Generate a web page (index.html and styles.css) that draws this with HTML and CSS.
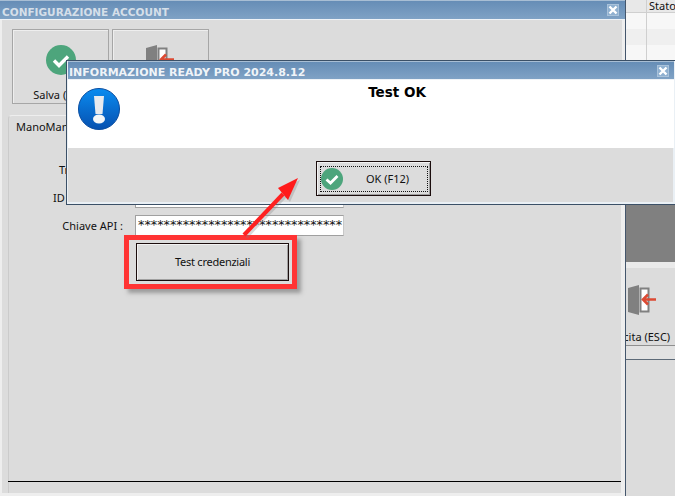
FILE: index.html
```html
<!DOCTYPE html>
<html lang="it">
<head>
<meta charset="utf-8">
<title>Configurazione account</title>
<link rel="stylesheet" href="styles.css">
</head>
<body>
<div class="desktop">
  <section class="window config">
    <header class="titlebar">
      <span class="title title-muted">CONFIGURAZIONE ACCOUNT</span>
      <span class="close">
        <svg width="10" height="10" viewBox="0 0 10 10"><path d="M1.500 1.500l7 7M8.500 1.500l-7 7" stroke="#fff" stroke-width="2.400"/></svg>
      </span>
    </header>
    <div class="config-body">
      <div class="toolbar">
        <div class="tool">
          <svg class="tool-icon" width="30" height="30" viewBox="0 0 30 30"><circle cx="15" cy="15" r="15" fill="#4da57c"/><path d="M8 15.500l5 5 9-9" fill="none" stroke="#fff" stroke-width="3.400"/></svg>
          <span class="tool-label">Salva (F12)</span>
        </div>
        <div class="tool">
          <svg class="tool-icon" width="30" height="30" viewBox="0 0 30 30"><path d="M0 3L11 0V30L0 27Z" fill="#808080"/><path d="M12.500 3.500H20.500V26.500H12.500Z" fill="#fff" stroke="#808080" stroke-width="2"/><path d="M28 14.500H15M20 9.500L15 14.500L20 19.500" fill="none" stroke="#dc4a33" stroke-width="2.600"/></svg>
          <span class="tool-label">Uscita (ESC)</span>
        </div>
      </div>
      <div class="pane">
        <div class="pane-tab">ManoMano</div>
        <div class="form">
          <div class="row"><label class="field-label">Tracking ID :</label><div class="input"></div></div>
          <div class="row"><label class="field-label">ID Merchant :</label><div class="input"></div></div>
          <div class="row"><label class="field-label">Chiave API :</label><div class="input">********************************</div></div>
          <div class="row row-button"><div class="test-btn">Test credenziali</div></div>
        </div>
      </div>
    </div>
  </section>

  <aside class="side">
    <div class="grid-head"><span class="col-a"></span><span class="col-b">Stato</span></div>
    <div class="grid-row"><span class="col-a"></span><span class="col-b"></span></div>
    <div class="grid-row grid-row-alt"><span class="col-a"></span><span class="col-b"></span></div>
    <div class="grid-row"><span class="col-a"></span><span class="col-b"></span></div>
    <div class="grid-empty"></div>
    <div class="side-tool">
      <svg class="side-icon" width="30" height="30" viewBox="0 0 30 30"><path d="M0 3L11 0V30L0 27Z" fill="#808080"/><path d="M12.500 3.500H20.500V26.500H12.500Z" fill="#fff" stroke="#808080" stroke-width="2"/><path d="M28 14.500H15M20 9.500L15 14.500L20 19.500" fill="none" stroke="#dc4a33" stroke-width="2.600"/></svg>
      <span class="side-label">Uscita (ESC)</span>
    </div>
    <div class="side-strip"></div>
    <div class="side-rest"></div>
  </aside>

  <section class="window dialog">
    <header class="titlebar dialog-title">
      <span class="title">INFORMAZIONE READY PRO 2024.8.12</span>
      <span class="close">
        <svg width="10" height="10" viewBox="0 0 10 10"><path d="M1.500 1.500l7 7M8.500 1.500l-7 7" stroke="#fff" stroke-width="2.400"/></svg>
      </span>
    </header>
    <div class="dialog-msg">
      <svg class="info-icon" width="42" height="42" viewBox="0 0 42 42">
        <defs><linearGradient id="blue" x1="0" y1="0" x2="0" y2="1"><stop offset="0" stop-color="#0a8cf0"/><stop offset="1" stop-color="#0650b0"/></linearGradient></defs>
        <circle cx="21" cy="21" r="20.500" fill="url(#blue)" stroke="#0a4da0"/>
        <path d="M16 8h10l-1.500 18h-7z" fill="#e8eaee"/>
        <ellipse cx="21" cy="31" rx="6" ry="4.500" fill="#f4f6f8"/>
      </svg>
      <strong class="msg-text">Test OK</strong>
    </div>
    <div class="dialog-foot">
      <div class="ok-btn">
        <span class="ok-inner">
          <svg width="22" height="22" viewBox="0 0 22 22"><circle cx="11" cy="11" r="11" fill="#4da57c"/><path d="M5.500 11.500l4 3.500 7-7" fill="none" stroke="#fff" stroke-width="2.800"/></svg>
          <span class="ok-label">OK (F12)</span>
        </span>
      </div>
    </div>
  </section>

  <div class="callout"></div>
  <svg class="arrow" width="90" height="90" viewBox="0 0 90 90">
    <path d="M4 70L43 29" stroke="#808080" stroke-opacity=".3" stroke-width="4" transform="translate(2 2)"/>
    <path d="M58 13L38 23L48 35Z" fill="#808080" fill-opacity=".3" transform="translate(2 2)"/>
    <path d="M4 70L43 29" stroke="#ff2020" stroke-width="4"/>
    <path d="M58 13L38 23L48 35Z" fill="#ff1a1a"/>
  </svg>
</div>
</body>
</html>
```

FILE: styles.css
```css
* { box-sizing: border-box; }
html, body { margin: 0; padding: 0; }
body { background: #808080; }
.desktop {
  position: relative;
  width: 675px;
  height: 496px;
  overflow: hidden;
  display: flex;
  font-family: "Noto Sans", "DejaVu Sans", sans-serif;
  font-size: 11px;
  line-height: 14px;
  color: #111;
}
.window { display: flex; flex-direction: column; background: #dcdcdc; }
.config {
  width: 626px;
  height: 496px;
  flex: none;
  border-right: 1px solid #44566c;
  background: #eeeeee;
}
.titlebar {
  height: 20px;
  flex: none;
  display: flex;
  align-items: center;
  justify-content: space-between;
  padding: 4px 6px 0 2px;
  background: linear-gradient(#668db6, #7fa2c5);
  border-top: 1px solid #a8bed4;
  border-bottom: 1px solid #eef2f6;
}
.dialog-title { height: 19px; padding-left: 1px; padding-right: 5px; }
.title {
  font-family: "DejaVu Sans", sans-serif;
  font-weight: bold;
  font-size: 11px;
  color: #f0f4f8;
  white-space: nowrap;
}
.title-muted { color: #d5dfe9; font-size: 10.500px; }
.close {
  width: 12px;
  height: 12px;
  margin-top: -4px;
  display: flex;
  align-items: center;
  justify-content: center;
  background: #8fb0d0;
  border: 1px solid #a9c2da;
}
.config-body {
  flex: 1;
  display: flex;
  flex-direction: column;
  margin: 0 3px 3px 2px;
  padding: 9px 0 0 6px;
  background: #dcdcdc;
}
.toolbar { display: flex; gap: 3px; padding-left: 4px; height: 75px; flex: none; }
.tool {
  width: 97px;
  height: 75px;
  display: flex;
  flex-direction: column;
  align-items: center;
  padding-top: 15px;
  background: #dcdcdc;
  border: 1px solid #a6a6a6;
  box-shadow: inset 1px 1px 0 #eeeeee;
}
.tool-label { margin-top: 13px; white-space: nowrap; }
.pane {
  flex: 1;
  min-height: 0;
  margin-top: 11px;
  border-left: 1px solid #cbcbcb;
  border-top: 1px solid #eeeeee;
  border-top-left-radius: 4px;
  border-right: 1px solid #eeeeee;
  padding-bottom: 11px;
  display: flex;
  flex-direction: column;
}
.pane-tab { padding: 4px 0 0 7px; height: 36px; flex: none; }
.form {
  flex: 1;
  display: flex;
  flex-direction: column;
  gap: 7px;
  border-bottom: 1px solid #000;
  margin-left: -1px;
  padding-top: 7px;
}
.row { display: flex; align-items: center; height: 21px; gap: 12px; }
.field-label { width: 115px; text-align: right; white-space: nowrap; flex: none; }
.input {
  width: 209px;
  height: 21px;
  background: #fff;
  border: 1px solid #a0a0a0;
  border-right-color: #c8c8c8;
  padding: 2px 0 0 2px;
  overflow: hidden;
  white-space: nowrap;
  font-family: "DejaVu Sans", sans-serif;
  font-size: 12.750px;
  line-height: 14px;
}
.row-button { height: 38px; padding-left: 128px; }
.test-btn {
  width: 153px;
  height: 38px;
  display: flex;
  align-items: center;
  justify-content: center;
  letter-spacing: -.25px;
  border: 1px solid #1b0d0d;
  box-shadow: inset 1px 1px 0 #f2f2f2, inset -1px -1px 0 #a0a0a0;
  background: #dcdcdc;
}
.side { flex: 1; display: flex; flex-direction: column; background: #f4f4f4; }
.grid-head { height: 13px; display: flex; background: #e8e8e8; border-bottom: 1px solid #cfcfcf; flex: none; }
.grid-row { height: 16px; display: flex; background: #f7f7f7; flex: none; }
.grid-row-alt { background: #efefef; }
.col-a { width: 21px; border-right: 1px solid #cfcfcf; flex: none; }
.col-b { flex: 1; padding-left: 2px; line-height: 11px; white-space: nowrap; }
.grid-empty { height: 201px; flex: none; background: #808080; }
.side-tool {
  height: 84px;
  flex: none;
  display: flex;
  flex-direction: column;
  overflow: hidden;
  border-top: 6px solid #eaeaea;
  border-bottom: 1px solid #8f8f8f;
  background: #dcdcdc;
  padding-top: 17px;
}
.side-icon { margin-left: 2px; flex: none; }
.side-label { margin: 15px 0 0 -16px; white-space: nowrap; }
.side-strip { height: 14px; flex: none; background: #e2e2e2; border-bottom: 1px solid #5d6a78; }
.side-rest { flex: 1; background: #dcdcdc; }
.dialog {
  position: absolute;
  left: 66px;
  top: 60px;
  width: 609px;
  height: 145px;
  border: 1px solid #3b5067;
  border-right: 0;
  padding: 0 1px 0 1px;
  background: #eaf0f5;
}
.dialog-msg {
  height: 68px;
  flex: none;
  display: flex;
  background: #fff;
  padding: 8px 0 0 10px;
}
.info-icon { flex: none; }
.msg-text {
  display: block;
  width: 562px;
  text-align: center;
  font-family: "DejaVu Sans", sans-serif;
  font-size: 13.500px;
  line-height: 18px;
  color: #000;
  margin-top: -5px;
  height: 20px;
}
.dialog-foot {
  flex: 1;
  background: #dcdcdc;
  margin: 0 1px 2px 0;
  padding: 13px 0 0 248px;
}
.ok-btn {
  width: 115px;
  height: 35px;
  border: 1px solid #1b0d0d;
  box-shadow: inset 1px 1px 0 #f2f2f2, inset -1px -1px 0 #a0a0a0;
  padding: 4px 2px 3px 3px;
}
.ok-inner {
  display: flex;
  align-items: center;
  height: 100%;
  border: 1px dotted #111;
}
.ok-label { margin-left: 23px; white-space: nowrap; }
.callout {
  position: absolute;
  left: 124px;
  top: 235px;
  width: 173px;
  height: 54px;
  border: 5px solid #ff3333;
  box-shadow: 4px 4px 4px rgba(90, 90, 90, .5);
}
.arrow { position: absolute; left: 240px; top: 165px; }
```
